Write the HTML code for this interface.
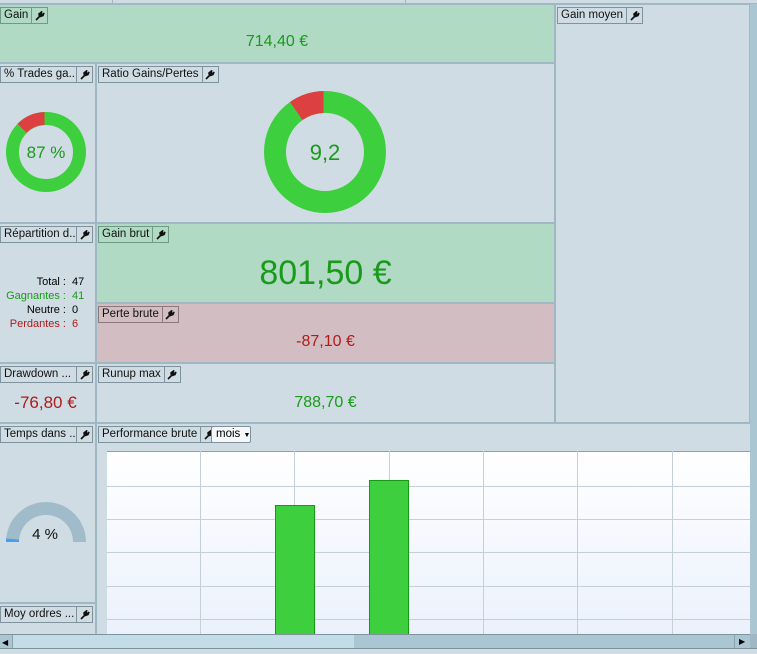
<!DOCTYPE html><html><head><style>
*{margin:0;padding:0;box-sizing:border-box}
body{width:757px;height:654px;overflow:hidden;background:#9fb8c4;font-family:"Liberation Sans",sans-serif;font-size:11px;position:relative}
.p{position:absolute;background:#cfdce3}
.t{position:absolute;top:2px;left:0;height:17px;border:1px solid #7f939c;display:flex;background:transparent;color:#111;font-size:11.5px;line-height:15px;white-space:nowrap;overflow:hidden}
.t span{padding:0 3px;white-space:nowrap;overflow:hidden}
.t b{width:16px;flex:none;border-left:1px solid #7f939c;font-weight:normal;display:flex;align-items:center;justify-content:center}
.v{position:absolute;left:0;right:0;text-align:center}
</style></head><body>
<div style="position:absolute;left:0;top:0;width:757px;height:4px;background:#cfdce3;border-bottom:1px solid #9fb8c4"></div>
<div style="position:absolute;left:112px;top:0;width:1px;height:4px;background:#9fb8c4"></div>
<div style="position:absolute;left:405px;top:0;width:1px;height:4px;background:#9fb8c4"></div>
<svg width="0" height="0" style="position:absolute"><defs><symbol id="w" viewBox="0 0 10 10"><path d="M1 9 L5 5 M4.5 5.5 L4 3 L6.5 1 L6.3 3.2 L8 3.5 L9 2 L8 4.5 L5.5 5.5Z" stroke="#111" stroke-width="1.6" fill="#111"/></symbol></defs></svg>

<div class="p" style="left:0;top:5px;width:554px;height:57px;background:#b0dac4">
<div class="t" style="border-color:#6f9b85"><span>Gain</span><b style="border-color:#6f9b85"><svg width="10" height="10"><use href="#w"/></svg></b></div>
<div class="v" style="top:28px;font-size:16px;color:#1a9a1a">714,40 €</div></div>

<div class="p" style="left:556px;top:5px;width:193px;height:417px">
<div class="t" style="left:1px"><span>Gain moyen</span><b><svg width="10" height="10"><use href="#w"/></svg></b></div></div>
<div style="position:absolute;left:750px;top:4px;width:7px;height:630px;background:#a9c6d2"></div>

<div class="p" style="left:0;top:64px;width:95px;height:158px">
<div class="t" style="width:93px"><span style="flex:1">% Trades ga...</span><b><svg width="10" height="10"><use href="#w"/></svg></b></div>
<svg style="position:absolute;left:0;top:0" width="95" height="158">
<circle cx="46" cy="88" r="33.5" fill="none" stroke="#3ecf3e" stroke-width="13"/>
<path d="M44.5 48 A40 40 0 0 0 17.5 59.8 L26.5 68.8 A27 27 0 0 1 44.5 61Z" fill="#dc4040"/>
<text x="46" y="94" text-anchor="middle" font-size="17" fill="#1a9a1a" font-family="Liberation Sans">87 %</text></svg></div>

<div class="p" style="left:97px;top:64px;width:457px;height:158px">
<div class="t" style="left:1px"><span>Ratio Gains/Pertes</span><b><svg width="10" height="10"><use href="#w"/></svg></b></div>
<svg style="position:absolute;left:0;top:0" width="457" height="158">
<circle cx="228" cy="88" r="50" fill="none" stroke="#3ecf3e" stroke-width="22"/>
<path d="M226.5 27 A61 61 0 0 0 193 38 L205.5 56 A39 39 0 0 1 226.5 49Z" fill="#dc4040"/>
<text x="228" y="96" text-anchor="middle" font-size="22" fill="#1a9a1a" font-family="Liberation Sans">9,2</text></svg></div>

<div class="p" style="left:0;top:224px;width:95px;height:138px">
<div class="t" style="width:93px"><span style="flex:1">Répartition d...</span><b><svg width="10" height="10"><use href="#w"/></svg></b></div>
<div style="position:absolute;top:51px;left:0;width:66px;text-align:right;line-height:14px">
<div>Total :</div><div style="color:#1a9a1a">Gagnantes :</div><div>Neutre :</div><div style="color:#b01a1a">Perdantes :</div></div>
<div style="position:absolute;top:51px;left:72px;line-height:14px">
<div>47</div><div style="color:#1a9a1a">41</div><div>0</div><div style="color:#b01a1a">6</div></div></div>

<div class="p" style="left:97px;top:224px;width:457px;height:78px;background:#b0dac4">
<div class="t" style="left:1px;border-color:#6f9b85"><span>Gain brut</span><b style="border-color:#6f9b85"><svg width="10" height="10"><use href="#w"/></svg></b></div>
<div class="v" style="top:30px;font-size:34px;color:#1a9a1a">801,50 €</div></div>
<div class="p" style="left:97px;top:304px;width:457px;height:58px;background:#d2bec2">
<div class="t" style="left:1px;border-color:#8a7a7e"><span>Perte brute</span><b style="border-color:#8a7a7e"><svg width="10" height="10"><use href="#w"/></svg></b></div>
<div class="v" style="top:29px;font-size:16px;color:#b01a1a">-87,10 €</div></div>

<div class="p" style="left:0;top:364px;width:95px;height:58px">
<div class="t" style="width:93px"><span style="flex:1">Drawdown ...</span><b><svg width="10" height="10"><use href="#w"/></svg></b></div>
<div class="v" style="left:-4px;top:29px;font-size:17px;color:#b01a1a">-76,80 €</div></div>
<div class="p" style="left:97px;top:364px;width:457px;height:58px">
<div class="t" style="left:1px"><span>Runup max</span><b><svg width="10" height="10"><use href="#w"/></svg></b></div>
<div class="v" style="top:30px;font-size:16px;color:#1a9a1a">788,70 €</div></div>

<div class="p" style="left:0;top:424px;width:95px;height:178px">
<div class="t" style="width:93px"><span style="flex:1">Temps dans ...</span><b><svg width="10" height="10"><use href="#w"/></svg></b></div>
<svg style="position:absolute;left:0;top:0" width="95" height="178">
<path d="M6 118 A40 40 0 0 1 86 118 L73 118 A27 27 0 0 0 19 118Z" fill="#a0bccb"/>
<path d="M6 118 L19 118 L19 115.5 L6 114.5Z" fill="#4a9ef0"/>
<text x="45" y="115" text-anchor="middle" font-size="15" fill="#111" font-family="Liberation Sans">4 %</text></svg></div>
<div class="p" style="left:0;top:604px;width:95px;height:30px">
<div class="t" style="width:93px"><span style="flex:1">Moy ordres ...</span><b><svg width="10" height="10"><use href="#w"/></svg></b></div></div>

<div class="p" style="left:97px;top:424px;width:653px;height:210px">
<div class="t" style="left:1px"><span>Performance brute</span><b><svg width="10" height="10"><use href="#w"/></svg></b></div>
<div style="position:absolute;left:114px;top:2px;width:40px;height:17px;border:1px solid #7f939c;border-radius:2px;background:#f5f7f8;line-height:15px;padding-left:4px;white-space:nowrap;font-size:11.5px">mois <span style="font-size:7px">▼</span></div>
<svg style="position:absolute;left:10px;top:27px" width="643" height="183">
<defs><linearGradient id="g" x1="0" y1="0" x2="0" y2="1"><stop offset="0" stop-color="#fff"/><stop offset="1" stop-color="#ebf1fc"/></linearGradient></defs>
<rect width="643" height="183" fill="url(#g)"/>
<line x1="0" y1="0.5" x2="643" y2="0.5" stroke="#8fa1aa"/>
<g stroke="#c5d0d6">
<line x1="93.5" y1="0" x2="93.5" y2="183"/><line x1="187.5" y1="0" x2="187.5" y2="183"/><line x1="282.5" y1="0" x2="282.5" y2="183"/><line x1="376.5" y1="0" x2="376.5" y2="183"/><line x1="470.5" y1="0" x2="470.5" y2="183"/><line x1="565.5" y1="0" x2="565.5" y2="183"/>
<line x1="0" y1="35.5" x2="643" y2="35.5"/><line x1="0" y1="68.5" x2="643" y2="68.5"/><line x1="0" y1="101.5" x2="643" y2="101.5"/><line x1="0" y1="135.5" x2="643" y2="135.5"/><line x1="0" y1="168.5" x2="643" y2="168.5"/></g>
<rect x="168.5" y="54.5" width="39" height="130" fill="#3ecf3e" stroke="#169a16"/>
<rect x="262.5" y="29.5" width="39" height="160" fill="#3ecf3e" stroke="#169a16"/></svg></div>

<div style="position:absolute;left:0;top:634px;width:750px;height:14px;background:#a9c6d2;border-top:1px solid #7f939c">
<div style="position:absolute;left:12px;top:0;width:342px;height:13px;background:#c3dde8;border-left:1px solid #8fa1aa"></div>
<div style="position:absolute;left:2px;top:3px;font-size:8px">◀</div>
<div style="position:absolute;left:734px;top:0;width:16px;height:13px;border-left:1px solid #8fa1aa;font-size:8px;padding:2px 0 0 4px">▶</div></div>
<div style="position:absolute;left:0;top:648px;width:757px;height:6px;background:#cfdce3;border-top:1px solid #7f939c"></div>
</body></html>
